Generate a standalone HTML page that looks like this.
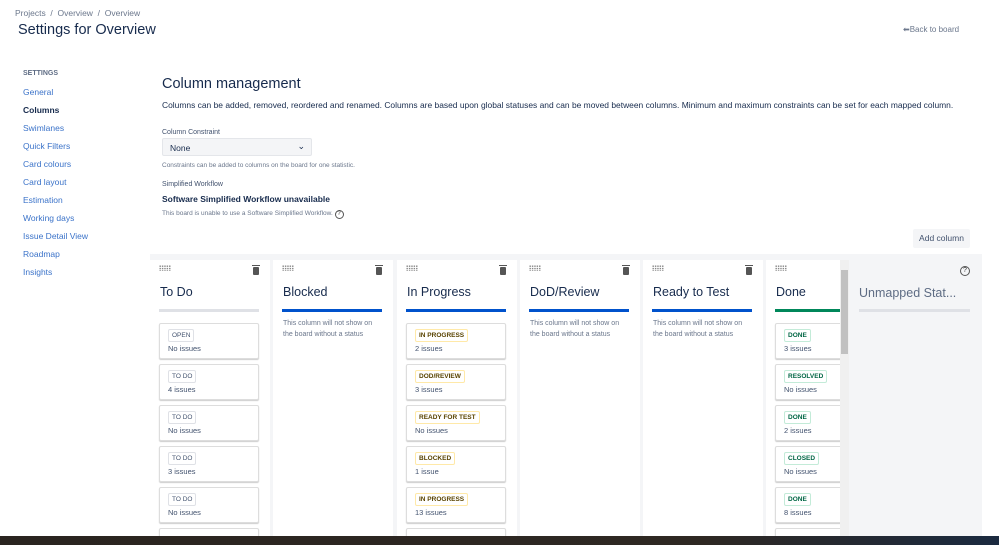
<!DOCTYPE html>
<html><head><style>
*{box-sizing:border-box;margin:0;padding:0}
html,body{width:999px;height:545px;overflow:hidden}
body{background:#fff;font-family:"Liberation Sans",sans-serif;color:#172b4d;position:relative}
.a{position:absolute;white-space:nowrap}
.nav{font-size:8.5px;color:#3b73c9}
.col{position:absolute;top:260px;width:120px;height:276px;background:#fff;overflow:hidden}
.col h3{position:absolute;left:10px;top:25px;font-size:12.5px;font-weight:normal;color:#172b4d}
.col .ln{position:absolute;left:9px;top:49px;width:100px;height:3px}
.dots{position:absolute;left:9px;top:5px;width:12px;height:6px;background-image:radial-gradient(#888 40%,transparent 45%);background-size:2.4px 2.4px}
.bin{position:absolute;right:11px;top:7px;width:6px;height:8px;background:#555;border-radius:1px}
.bin:before{content:"";position:absolute;left:-1px;top:-2px;width:8px;height:1px;background:#555}
.card{position:absolute;left:9px;width:100px;height:36px;border:1px solid #ddd;border-radius:2px;box-shadow:0 1px 1px #ccc;background:#fff}
.lz{position:absolute;left:8px;top:5px;font-size:6.5px;font-weight:bold;padding:2px 3px;border:1px solid;border-radius:2px}
.g{color:#42526e;border-color:#dfe1e6;font-weight:normal}
.ct{position:absolute;left:8px;top:20px;font-size:7.5px;color:#42526e}
.msg{position:absolute;left:10px;top:58px;font-size:7px;color:#6b778c;line-height:11px;white-space:normal;width:100px}
</style></head><body>
<div class="a" style="left:15px;top:8px;font-size:8.5px;color:#6b778c">Projects &nbsp;/ &nbsp;Overview &nbsp;/ &nbsp;Overview</div>
<div class="a" style="left:18px;top:22px;font-size:14.5px">Settings for Overview</div>
<div class="a" style="left:903px;top:25px;font-size:8px;color:#6b778c">⬅Back to board</div>
<div class="a" style="left:23px;top:70px;font-size:7px;font-weight:bold;color:#5e6c84">SETTINGS</div>
<div class="a nav" style="left:23px;top:87px">General</div>
<div class="a" style="left:23px;top:105px;font-size:8.5px;font-weight:bold">Columns</div>
<div class="a nav" style="left:23px;top:123px">Swimlanes</div>
<div class="a nav" style="left:23px;top:141px">Quick Filters</div>
<div class="a nav" style="left:23px;top:159px">Card colours</div>
<div class="a nav" style="left:23px;top:177px">Card layout</div>
<div class="a nav" style="left:23px;top:195px">Estimation</div>
<div class="a nav" style="left:23px;top:213px">Working days</div>
<div class="a nav" style="left:23px;top:231px">Issue Detail View</div>
<div class="a nav" style="left:23px;top:249px">Roadmap</div>
<div class="a nav" style="left:23px;top:267px">Insights</div>
<div class="a" style="left:162px;top:76px;font-size:14.5px">Column management</div>
<div class="a" style="left:162px;top:100px;font-size:8.45px">Columns can be added, removed, reordered and renamed. Columns are based upon global statuses and can be moved between columns. Minimum and maximum constraints can be set for each mapped column.</div>
<div class="a" style="left:162px;top:129px;font-size:7px;color:#42526e">Column Constraint</div>
<div class="a" style="left:162px;top:138px;width:150px;height:18px;background:#f4f5f7;border:1px solid #e4e6ea;border-radius:2px;font-size:8.5px;padding:4px 7px">None<span style="position:absolute;right:6px;top:2px;font-size:9px">⌄</span></div>
<div class="a" style="left:162px;top:162px;font-size:6.5px;color:#6b778c">Constraints can be added to columns on the board for one statistic.</div>
<div class="a" style="left:162px;top:181px;font-size:7px;color:#42526e">Simplified Workflow</div>
<div class="a" style="left:162px;top:194px;font-size:8.5px;font-weight:bold">Software Simplified Workflow unavailable</div>
<div class="a" style="left:162px;top:210px;font-size:6.5px;color:#6b778c">This board is unable to use a Software Simplified Workflow. <span style="display:inline-block;width:9px;height:9px;border:1px solid #555;border-radius:50%;font-size:6px;text-align:center;line-height:7px;color:#333">?</span></div>
<div class="a" style="left:913px;top:229px;width:57px;height:19px;background:#f4f5f7;border-radius:2px;font-size:8.5px;color:#42526e;text-align:center;line-height:19px">Add column</div>
<div class="a" style="left:150px;top:254px;width:832px;height:282px;background:#f4f5f7"></div>

<div class="col" style="left:150px"><div class="dots"></div><div class="bin"></div><h3>To Do</h3><div class="ln" style="background:#dfe1e6"></div>
<div class="card" style="top:63px"><span class="lz g">OPEN</span><span class="ct">No issues</span></div>
<div class="card" style="top:104px"><span class="lz g">TO DO</span><span class="ct">4 issues</span></div>
<div class="card" style="top:145px"><span class="lz g">TO DO</span><span class="ct">No issues</span></div>
<div class="card" style="top:186px"><span class="lz g">TO DO</span><span class="ct">3 issues</span></div>
<div class="card" style="top:227px"><span class="lz g">TO DO</span><span class="ct">No issues</span></div>
<div class="card" style="top:268px"></div></div>

<div class="col" style="left:273px"><div class="dots"></div><div class="bin"></div><h3>Blocked</h3><div class="ln" style="background:#0052cc"></div><div class="msg">This column will not show on the board without a status</div></div>

<div class="col" style="left:397px"><div class="dots"></div><div class="bin"></div><h3>In Progress</h3><div class="ln" style="background:#0052cc"></div>
<div class="card" style="top:63px"><span class="lz" style="color:#594300;border-color:#ffe9a8">IN PROGRESS</span><span class="ct">2 issues</span></div>
<div class="card" style="top:104px"><span class="lz" style="color:#594300;border-color:#ffe9a8">DOD/REVIEW</span><span class="ct">3 issues</span></div>
<div class="card" style="top:145px"><span class="lz" style="color:#594300;border-color:#ffe9a8">READY FOR TEST</span><span class="ct">No issues</span></div>
<div class="card" style="top:186px"><span class="lz" style="color:#594300;border-color:#ffe9a8">BLOCKED</span><span class="ct">1 issue</span></div>
<div class="card" style="top:227px"><span class="lz" style="color:#594300;border-color:#ffe9a8">IN PROGRESS</span><span class="ct">13 issues</span></div>
<div class="card" style="top:268px"></div></div>

<div class="col" style="left:520px"><div class="dots"></div><div class="bin"></div><h3>DoD/Review</h3><div class="ln" style="background:#0052cc"></div><div class="msg">This column will not show on the board without a status</div></div>

<div class="col" style="left:643px"><div class="dots"></div><div class="bin"></div><h3>Ready to Test</h3><div class="ln" style="background:#0052cc"></div><div class="msg">This column will not show on the board without a status</div></div>

<div class="col" style="left:766px;width:74px"><div class="dots"></div><h3>Done</h3><div class="ln" style="background:#00875a"></div>
<div class="card" style="top:63px"><span class="lz" style="color:#006644;border-color:#c3ebd8">DONE</span><span class="ct">3 issues</span></div>
<div class="card" style="top:104px"><span class="lz" style="color:#006644;border-color:#c3ebd8">RESOLVED</span><span class="ct">No issues</span></div>
<div class="card" style="top:145px"><span class="lz" style="color:#006644;border-color:#c3ebd8">DONE</span><span class="ct">2 issues</span></div>
<div class="card" style="top:186px"><span class="lz" style="color:#006644;border-color:#c3ebd8">CLOSED</span><span class="ct">No issues</span></div>
<div class="card" style="top:227px"><span class="lz" style="color:#006644;border-color:#c3ebd8">DONE</span><span class="ct">8 issues</span></div>
<div class="card" style="top:268px"></div></div>
<div class="a" style="left:840px;top:260px;width:9px;height:276px;background:#f0f0f0"></div>
<div class="a" style="left:841px;top:270px;width:7px;height:84px;background:#c1c1c1"></div>
<div class="a" style="left:859px;top:286px;font-size:12.5px;color:#5e6c84">Unmapped Stat...</div>
<div class="a" style="left:859px;top:309px;width:111px;height:3px;background:#dfe1e6"></div>
<div class="a" style="left:960px;top:266px;width:10px;height:10px;border:1px solid #555;border-radius:50%;font-size:7px;text-align:center;line-height:8px;color:#333">?</div>
<div class="a" style="left:0;top:536px;width:999px;height:9px;background:linear-gradient(90deg,#2a2420,#2e2822 70%,#1b2a40)"></div>
</body></html>
